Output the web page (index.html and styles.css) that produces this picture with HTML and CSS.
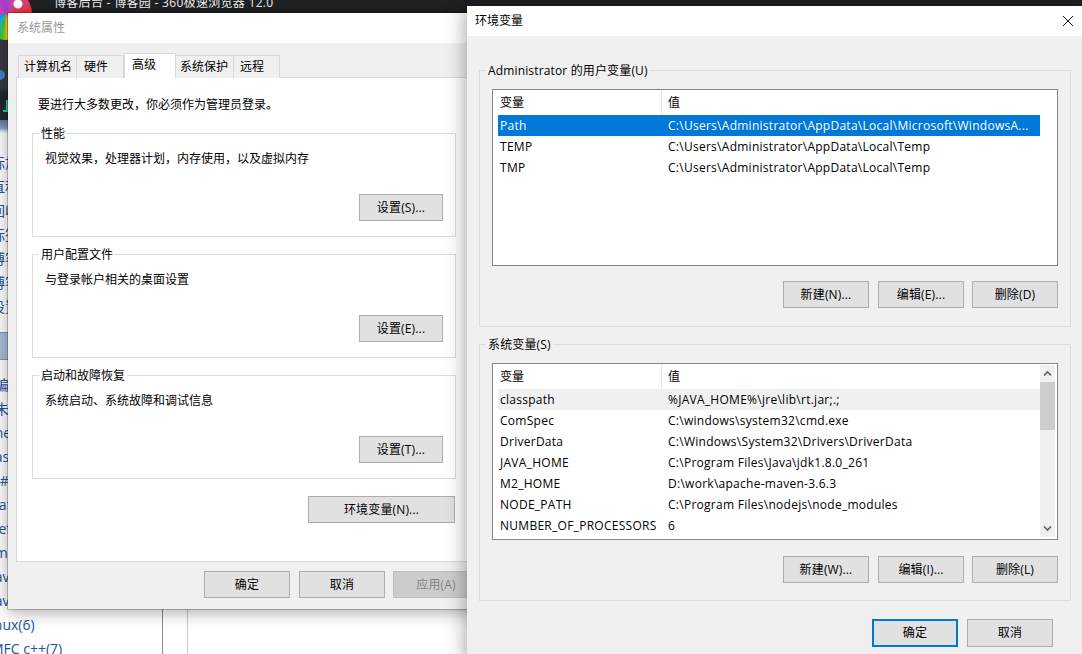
FILE: index.html
```html
<!DOCTYPE html>
<html lang="zh-CN">
<head>
<meta charset="utf-8">
<title>环境变量</title>
<link rel="stylesheet" href="styles.css">
</head>
<body>
<div class="desktop">
  <div class="browser">
    <div class="browser-top">
      <div class="logo"></div>
      <div class="tool-dot"></div>
      <div class="tool-glyph"></div>
      <div class="browser-title">博客后台 - 博客园 - 360极速浏览器 12.0</div>
    </div>
    <div class="browser-page">
      <div class="side">
        <div class="side-head"></div>
        <ul class="side-list first">
          <li>标加</li><li>直积</li><li>回收</li><li>标签</li><li>博客</li><li>博客</li><li>设置</li>
        </ul>
        <div class="side-band"></div>
        <ul class="side-list second">
          <li>·编辑</li><li>·未分</li><li>.net</li><li>·asp</li><li>C#语</li><li>Saf</li><li>·Jef</li><li>·mm</li><li>Java</li><li>Java</li><li class="nudge">Linux(6)</li><li>MFC c++(7)</li>
        </ul>
      </div>
      <div class="side-gutter"></div>
    </div>
  </div>

  <section class="window sys-window">
    <header class="titlebar sys-title">系统属性</header>
    <div class="sys-body">
      <nav class="tabs">
        <span class="tab tab-name">计算机名</span>
        <span class="tab tab-hw">硬件</span>
        <span class="tab tab-active">高级</span>
        <span class="tab tab-prot">系统保护</span>
        <span class="tab tab-remote">远程</span>
      </nav>
      <div class="panel">
        <p class="intro">要进行大多数更改，你必须作为管理员登录。</p>
        <div class="sys-group group">
          <span class="legend legend-white">性能</span>
          <p class="group-text">视觉效果，处理器计划，内存使用，以及虚拟内存</p>
          <button class="btn btn-set">设置(S)...</button>
        </div>
        <div class="sys-group group">
          <span class="legend legend-white">用户配置文件</span>
          <p class="group-text">与登录帐户相关的桌面设置</p>
          <button class="btn btn-set">设置(E)...</button>
        </div>
        <div class="sys-group group">
          <span class="legend legend-white">启动和故障恢复</span>
          <p class="group-text">系统启动、系统故障和调试信息</p>
          <button class="btn btn-set">设置(T)...</button>
        </div>
        <div class="env-row"><button class="btn btn-env">环境变量(N)...</button></div>
      </div>
      <footer class="sys-footer">
        <button class="btn btn-first">确定</button>
        <button class="btn">取消</button>
        <button class="btn btn-disabled">应用(A)</button>
      </footer>
    </div>
  </section>

  <section class="window env-window">
    <header class="titlebar env-title">
      <span>环境变量</span>
      <svg class="close" width="12" height="12" viewBox="0 0 12 12"><path d="M1 1l10 10M11 1L1 11" stroke="#111" stroke-width="1" fill="none"/></svg>
    </header>
    <div class="env-body">
      <div class="env-group group">
        <span class="legend legend-gray">Administrator 的用户变量(U)</span>
        <div class="listbox">
          <div class="list-main">
            <div class="row head"><span class="c1">变量</span><span class="c2">值</span></div>
            <div class="row selected"><span class="c1">Path</span><span class="c2">C:\Users\Administrator\AppData\Local\Microsoft\WindowsA...</span></div>
            <div class="row"><span class="c1">TEMP</span><span class="c2">C:\Users\Administrator\AppData\Local\Temp</span></div>
            <div class="row"><span class="c1">TMP</span><span class="c2">C:\Users\Administrator\AppData\Local\Temp</span></div>
          </div>
        </div>
        <div class="group-btns btns-user">
          <button class="btn btn-first">新建(N)...</button>
          <button class="btn">编辑(E)...</button>
          <button class="btn">删除(D)</button>
        </div>
      </div>
      <div class="env-group group">
        <span class="legend legend-gray">系统变量(S)</span>
        <div class="listbox">
          <div class="list-main">
            <div class="row head"><span class="c1">变量</span><span class="c2">值</span></div>
            <div class="row hover"><span class="c1">classpath</span><span class="c2">%JAVA_HOME%\jre\lib\rt.jar;.;</span></div>
            <div class="row"><span class="c1">ComSpec</span><span class="c2">C:\windows\system32\cmd.exe</span></div>
            <div class="row"><span class="c1">DriverData</span><span class="c2">C:\Windows\System32\Drivers\DriverData</span></div>
            <div class="row"><span class="c1">JAVA_HOME</span><span class="c2">C:\Program Files\Java\jdk1.8.0_261</span></div>
            <div class="row"><span class="c1">M2_HOME</span><span class="c2">D:\work\apache-maven-3.6.3</span></div>
            <div class="row"><span class="c1">NODE_PATH</span><span class="c2">C:\Program Files\nodejs\node_modules</span></div>
            <div class="row"><span class="c1">NUMBER_OF_PROCESSORS</span><span class="c2">6</span></div>
          </div>
          <div class="scrollbar">
            <svg class="arrow" width="15" height="17" viewBox="0 0 15 17"><path d="M4 10.5l3.5-3.5 3.5 3.5" stroke="#606060" stroke-width="1.6" fill="none"/></svg>
            <div class="track"><div class="thumb"></div></div>
            <svg class="arrow" width="15" height="17" viewBox="0 0 15 17"><path d="M4 6.5l3.5 3.5 3.5-3.5" stroke="#606060" stroke-width="1.6" fill="none"/></svg>
          </div>
        </div>
        <div class="group-btns">
          <button class="btn btn-first">新建(W)...</button>
          <button class="btn">编辑(I)...</button>
          <button class="btn">删除(L)</button>
        </div>
      </div>
      <footer class="env-footer">
        <button class="btn btn-default">确定</button>
        <button class="btn">取消</button>
      </footer>
    </div>
  </section>
</div>
</body>
</html>
```
FILE: styles.css
```css
* { box-sizing: border-box; }
html, body { margin: 0; padding: 0; }
body {
  font-family: "Open Sans", "Noto Sans CJK SC", sans-serif;
  font-size: 12px;
  color: #000;
  background: #fff;
}
p, ul { margin: 0; padding: 0; }
li { list-style: none; }

.desktop { position: relative; width: 1082px; height: 654px; overflow: hidden; background: #fff; }

/* background browser */
.browser { display: flex; flex-direction: column; height: 654px; }
.browser-top {
  position: relative;
  flex: 0 0 120px;
  overflow: hidden;
  background: linear-gradient(#202124 0, #202124 13px, #3a3a3e 40px, #3a3a3e 88px, #1d2a2c 92px, #1d2a2c 120px);
}
.logo {
  position: absolute;
  left: -20px; top: -12px;
  width: 52px; height: 52px;
  border-radius: 50%;
  background:
    radial-gradient(circle at 38px 16px, #fff 0, #fff 4px, transparent 5px),
    conic-gradient(#9c3fd0 0deg, #c848a8 35deg, #f0322e 90deg, #f5a010 170deg, #f5d010 178deg, #3cc83c 190deg, #18b8d8 215deg, #2a8cf0 240deg, #e03cb0 300deg, #9c3fd0 360deg);
}
.tool-dot { position: absolute; left: -5px; top: 70px; width: 10px; height: 10px; border-radius: 50%; background: #3b82c4; }
.tool-glyph { position: absolute; left: 3px; top: 100px; width: 5px; height: 12px; border-bottom: 2px solid #2fc79a; border-right: 2px solid #2fc79a; }
.browser-title {
  position: absolute;
  left: 54px; top: -5px;
  line-height: 16px;
  font-size: 12px;
  letter-spacing: .3px;
  color: #f2f2f2;
  white-space: nowrap;
}
.browser-page { flex: 1; display: flex; min-height: 0; }
.side { width: 163px; border-right: 1px solid #8a8a8a; overflow: hidden; }
.side-gutter { width: 25px; border-right: 1px solid #c8c8c8; }
.side-head { height: 14px; background: linear-gradient(#5f78a8 0, #8a9cc0 8px, #e8ecf4 12px, #fff 14px); }
.side-list { margin-left: -9px; color: #23509f; font-size: 14px; white-space: nowrap; }
.side-list.first { padding-top: 17px; line-height: 24px; }
.side-band { height: 28px; margin-top: 13px; background: #a9bcdd; border-top: 1px solid #8f8f8f; border-bottom: 1px solid #8f8f8f; }
.side-list.second { padding-top: 13px; line-height: 24px; }
.nudge { margin-left: -8px; }

/* windows */
.window { position: absolute; background: #f0f0f0; }
.sys-window {
  left: 8px; top: 13px;
  width: 480px; height: 596px;
  box-shadow: 0 0 0 1px rgba(0,0,0,.22), 0 3px 16px rgba(0,0,0,.35);
}
.env-window {
  left: 467px; top: 6px;
  width: 616px; height: 660px;
  box-shadow: 0 0 20px rgba(0,0,0,.4);
}
.titlebar { height: 30px; background: #fff; line-height: 30px; padding-left: 8px; }
.sys-title { padding-left: 9px; color: #999; }
.env-title { display: flex; justify-content: space-between; align-items: center; padding-right: 9px; }
.close { display: block; }

/* system properties */
.sys-body { padding: 9px 0 0 8px; }
.tabs { display: flex; align-items: flex-end; height: 25px; padding-left: 2px; position: relative; z-index: 1; }
.tab {
  height: 23px;
  margin-bottom: -1px;
  border: 1px solid #d9d9d9;
  border-bottom: 0;
  border-left-width: 0;
  background: #f0f0f0;
  line-height: 22px;
  padding-left: 6px;
}
.tab-name { width: 59px; border-left-width: 1px; padding-left: 5px; }
.tab-hw { width: 47px; padding-left: 7px; }
.tab-active {
  width: 52px; height: 25px;
  margin-bottom: -1px;
  background: #fff;
  border-left-width: 1px;
  padding-left: 7px;
  line-height: 21px;
}
.tab-prot { width: 58px; padding-left: 4px; }
.tab-remote { width: 46px; }
.panel { width: 470px; height: 485px; background: #fff; border: 1px solid #d9d9d9; padding: 17px 0 0 15px; }
.intro { padding-left: 6px; line-height: 20px; margin-bottom: 18px; }
.group { position: relative; border: 1px solid #dcdcdc; }
.sys-group {
  width: 424px; height: 104px;
  margin-bottom: 17px;
  padding: 15px 12px 15px;
  display: flex; flex-direction: column;
}
.legend { position: absolute; left: 6px; top: -9px; line-height: 18px; padding: 0 2px; white-space: nowrap; }
.legend-white { background: #fff; }
.legend-gray { background: #f0f0f0; letter-spacing: .15px; }
.group-text { line-height: 20px; }
.btn {
  display: block;
  width: 86px; height: 27px;
  margin: 0; padding: 0 0 2px;
  background: #e1e1e1;
  border: 1px solid #adadad;
  border-radius: 0;
  font: inherit;
  letter-spacing: .15px;
  color: #000;
}
.btn-set { width: 84px; margin-top: auto; align-self: flex-end; }
.env-row { width: 423px; display: flex; justify-content: flex-end; }
.btn-env { width: 147px; }
.sys-footer { display: flex; gap: 8px; padding: 9px 0 0 188px; }
.btn-first { margin-right: 1px; }
.btn-disabled { background: #ccc; border-color: #bfbfbf; color: #838383; }

/* environment variables */
.env-body { padding: 34px 0 0 12px; }
.env-group {
  width: 592px; height: 257px;
  margin-bottom: 17px;
  padding: 18px 12px 0 12px;
}
.listbox { display: flex; height: 177px; border: 1px solid #828790; background: #fff; }
.list-main { flex: 1; min-width: 0; padding-left: 5px; padding-right: 17px; }
.row { display: flex; height: 21px; line-height: 21px; white-space: nowrap; letter-spacing: .27px; }
.row.head { height: 25px; line-height: 26px; letter-spacing: 0; }
.c1 { width: 164px; padding-left: 2px; flex: none; overflow: hidden; }
.c2 { padding-left: 6px; flex: 1; }
.head .c1 { border-right: 1px solid #e5e5e5; }
.selected { background: #0078d7; color: #fff; }
.hover { background: #f0f0f0; }
.scrollbar { flex: none; width: 15px; margin: 1px 2px 2px -17px; background: #f0f0f0; display: flex; flex-direction: column; }
.arrow { display: block; flex: none; }
.track { flex: 1; }
.thumb { height: 48px; background: #cdcdcd; }
.group-btns { display: flex; justify-content: flex-end; gap: 8px; margin-top: 16px; }
.btns-user { margin-top: 15px; }
.env-footer { display: flex; gap: 9px; padding: 1px 0 0 393px; }
.env-footer .btn { height: 28px; }
.btn-default { border: 2px solid #0078d7; }
```
